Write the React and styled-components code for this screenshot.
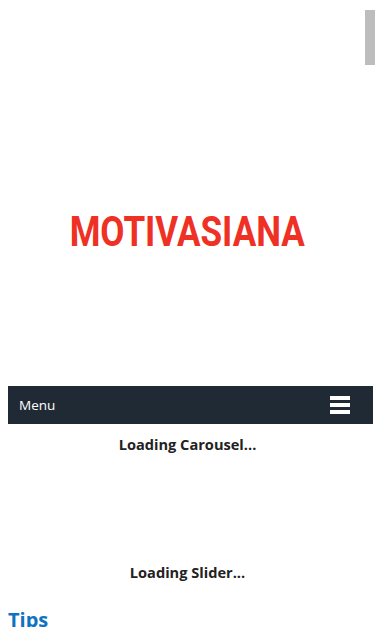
import React from "react";
import styled, { createGlobalStyle } from "styled-components";

const GlobalStyle = createGlobalStyle`
  html, body {
    margin: 0;
    padding: 0;
    background: #ffffff;
  }
  body {
    font-family: "Open Sans", "Liberation Sans", sans-serif;
    color: #222222;
    overflow: hidden;
  }
`;

const Page = styled.div`
  position: relative;
`;

const ScrollTab = styled.div`
  position: absolute;
  top: 10px;
  right: 0;
  width: 10px;
  height: 55px;
  background: #bdbdbd;
`;

const Header = styled.header`
  height: 386px;
  display: flex;
  align-items: center;
  justify-content: center;
`;

const Logo = styled.h1`
  margin: 0;
  padding-top: 76px;
  font-family: "Roboto", "Liberation Sans", sans-serif;
  font-weight: 700;
  font-size: 43px;
  line-height: 1;
  color: #ee3124;
  transform: scaleX(0.815);
`;

const NavBar = styled.nav`
  height: 38px;
  margin: 0 2px 0 8px;
  background: #1f2a35;
  display: flex;
  align-items: center;
  justify-content: space-between;
  padding: 0 23px 0 11px;
`;

const NavLabel = styled.span`
  color: #ffffff;
  font-size: 13.5px;
`;

const Burger = styled.div`
  display: flex;
  flex-direction: column;
  gap: 3px;
`;

const BurgerLine = styled.span`
  display: block;
  width: 20px;
  height: 4px;
  background: #ffffff;
`;

const LoadingText = styled.p`
  margin: 0;
  height: ${(p) => p.$h}px;
  padding-top: ${(p) => p.$top}px;
  text-align: center;
  font-weight: 700;
  font-size: 14.6px;
  line-height: 20px;
  color: #222222;
  box-sizing: border-box;
`;

const SectionTitle = styled.h2`
  margin: 0;
  padding: 12px 0 0 8px;
  font-family: "Open Sans", "Liberation Sans", sans-serif;
  font-weight: 700;
  font-size: 20px;
  line-height: 24px;
  color: #0f72c2;
`;

export default function App() {
  return (
    <>
      <GlobalStyle />
      <Page>
        <ScrollTab />
        <Header>
          <Logo>MOTIVASIANA</Logo>
        </Header>
        <NavBar>
          <NavLabel>Menu</NavLabel>
          <Burger>
            <BurgerLine />
            <BurgerLine />
            <BurgerLine />
          </Burger>
        </NavBar>
        <LoadingText $top={10} $h={132}>Loading Carousel...</LoadingText>
        <LoadingText $top={6} $h={40}>Loading Slider...</LoadingText>
        <SectionTitle>Tips</SectionTitle>
      </Page>
    </>
  );
}
